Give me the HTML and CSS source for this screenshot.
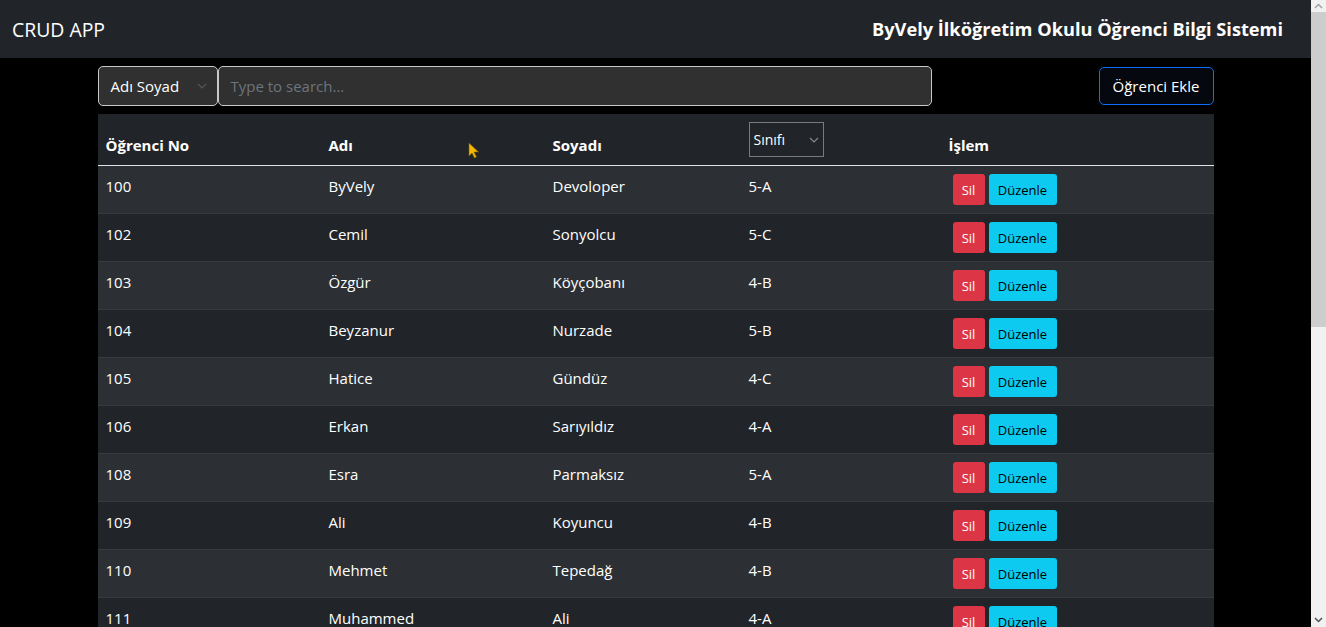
FILE: index.html
```html
<!DOCTYPE html>
<html lang="tr">
<head>
<meta charset="utf-8">
<title>CRUD APP</title>
<link rel="stylesheet" href="styles.css">
</head>
<body>
<div class="shell">
  <div class="page">
    <nav class="navbar">
      <span class="brand">CRUD APP</span>
      <span class="title">ByVely İlköğretim Okulu Öğrenci Bilgi Sistemi</span>
    </nav>
    <main class="container">
      <div class="toolbar">
        <div class="input-group">
          <div class="select">Adı Soyad
            <svg class="chev" width="10" height="6" viewBox="0 0 10 6"><path d="M1 1l4 4 4-4" fill="none" stroke="#555" stroke-width="1.2"/></svg>
          </div>
          <div class="search">Type to search...</div>
        </div>
        <button class="btn-add">Öğrenci Ekle</button>
      </div>
      <table class="table">
        <thead>
          <tr>
            <th class="c1">Öğrenci No</th>
            <th class="c2">Adı</th>
            <th class="c3">Soyadı</th>
            <th class="c4"><div class="class-select">Sınıfı<svg class="chev2" width="10" height="6" viewBox="0 0 10 6"><path d="M1 1l4 4 4-4" fill="none" stroke="#888" stroke-width="1.2"/></svg></div></th>
            <th class="c5">İşlem</th>
          </tr>
        </thead>
        <tbody>
          <tr><td>100</td><td>ByVely</td><td>Devoloper</td><td>5-A</td><td><span class="btn sil">Sil</span><span class="btn duz">Düzenle</span></td></tr>
          <tr><td>102</td><td>Cemil</td><td>Sonyolcu</td><td>5-C</td><td><span class="btn sil">Sil</span><span class="btn duz">Düzenle</span></td></tr>
          <tr><td>103</td><td>Özgür</td><td>Köyçobanı</td><td>4-B</td><td><span class="btn sil">Sil</span><span class="btn duz">Düzenle</span></td></tr>
          <tr><td>104</td><td>Beyzanur</td><td>Nurzade</td><td>5-B</td><td><span class="btn sil">Sil</span><span class="btn duz">Düzenle</span></td></tr>
          <tr><td>105</td><td>Hatice</td><td>Gündüz</td><td>4-C</td><td><span class="btn sil">Sil</span><span class="btn duz">Düzenle</span></td></tr>
          <tr><td>106</td><td>Erkan</td><td>Sarıyıldız</td><td>4-A</td><td><span class="btn sil">Sil</span><span class="btn duz">Düzenle</span></td></tr>
          <tr><td>108</td><td>Esra</td><td>Parmaksız</td><td>5-A</td><td><span class="btn sil">Sil</span><span class="btn duz">Düzenle</span></td></tr>
          <tr><td>109</td><td>Ali</td><td>Koyuncu</td><td>4-B</td><td><span class="btn sil">Sil</span><span class="btn duz">Düzenle</span></td></tr>
          <tr><td>110</td><td>Mehmet</td><td>Tepedağ</td><td>4-B</td><td><span class="btn sil">Sil</span><span class="btn duz">Düzenle</span></td></tr>
          <tr><td>111</td><td>Muhammed</td><td>Ali</td><td>4-A</td><td><span class="btn sil">Sil</span><span class="btn duz">Düzenle</span></td></tr>
          <tr><td>112</td><td>Zeynep</td><td>Yılmaz</td><td>5-C</td><td><span class="btn sil">Sil</span><span class="btn duz">Düzenle</span></td></tr>
        </tbody>
      </table>
      <svg class="cursor" width="12" height="17" viewBox="0 0 12 17"><path d="M1 1v13l3-3 2.5 5 2-1-2.5-5h4.5z" fill="#f5b800" stroke="#7a5a00" stroke-width="0.6"/></svg>
    </main>
  </div>
  <div class="scrollbar">
    <div class="sb-arrow up"><svg width="9" height="6" viewBox="0 0 9 6"><path d="M1 5l3.5-3.5L8 5" fill="none" stroke="#a3a3a3" stroke-width="1.5"/></svg></div>
    <div class="sb-track"><div class="sb-thumb"></div></div>
    <div class="sb-arrow down"><svg width="9" height="6" viewBox="0 0 9 6"><path d="M1 1l3.5 3.5L8 1" fill="none" stroke="#505050" stroke-width="1.5"/></svg></div>
  </div>
</div>
</body>
</html>
```

FILE: styles.css
```css
* { box-sizing: border-box; }
html, body {
  margin: 0;
  height: 100%;
  overflow: hidden;
  background: #000;
  color: #fff;
  font-family: "Open Sans", "Noto Sans", sans-serif;
  font-size: 15px;
}
.shell { display: flex; height: 627px; }
.page { flex: 1; min-width: 0; background: #000; overflow: hidden; }
.navbar {
  height: 58px;
  background: #212529;
  display: flex;
  align-items: center;
  justify-content: space-between;
  padding: 0 28px 0 12px;
}
.brand { font-size: 19.4px; color: #fff; }
.title { font-size: 18.2px; font-weight: 700; color: #fff; }
.container {
  width: 1116px;
  margin: 0 auto;
  position: relative;
}
.toolbar {
  display: flex;
  justify-content: space-between;
  align-items: center;
  margin-top: 8px;
  height: 40px;
}
.input-group { display: flex; width: 834px; height: 40px; }
.select {
  width: 120px;
  background: #303030;
  border: 1px solid #c8c8c8;
  border-radius: 5px;
  padding: 0 12px;
  display: flex;
  align-items: center;
  justify-content: space-between;
  font-size: 15px;
}
.chev { margin-right: -2px; }
.search {
  flex: 1;
  background: #303030;
  border: 1px solid #c8c8c8;
  border-radius: 5px;
  padding: 0 12px;
  display: flex;
  align-items: center;
  color: #6c757d;
  font-size: 15px;
}
.btn-add {
  width: 115px;
  height: 38px;
  background: #05090f;
  border: 1px solid #0d6efd;
  border-radius: 5px;
  color: #fff;
  font-family: inherit;
  font-size: 15px;
  padding: 0;
}
.table {
  margin-top: 8px;
  width: 100%;
  border-collapse: collapse;
  background: #212529;
}
th, td { padding: 8px; text-align: left; }
thead tr { border-bottom: 1px solid #dee2e6; }
th { vertical-align: bottom; font-weight: 700; font-size: 15px; line-height: 24px; }
td { vertical-align: top; font-size: 15px; line-height: 24px; height: 48px; }
tbody tr { border-bottom: 1px solid #373b3e; }
tbody tr:nth-child(odd) { background: #2c3034; }
.c1 { width: 223px; }
.c2 { width: 224px; }
.c3 { width: 196px; }
.c4 { width: 200px; }
.class-select {
  width: 75px;
  height: 35px;
  border: 1px solid #7a7a7a;
  display: flex;
  align-items: center;
  justify-content: space-between;
  padding: 0 4px;
  font-weight: 400;
  font-size: 14px;
}
.btn {
  display: inline-block;
  height: 31px;
  line-height: 32px;
  border-radius: 3px;
  font-size: 13px;
  margin-left: 4px;
  vertical-align: top;
  text-align: center;
}
.sil { background: #dc3545; color: #fff; width: 32px; }
.duz { background: #0dcaf0; color: #000; width: 68px; }
.cursor { position: absolute; left: 370px; top: 76px; }
.scrollbar {
  width: 15px;
  background: #f1f1f1;
  display: flex;
  flex-direction: column;
}
.sb-arrow { height: 12px; display: flex; align-items: center; justify-content: center; }
.sb-track { flex: 1; }
.sb-thumb { height: 315px; background: #cdcdcd; }
.sb-arrow.down { height: 15px; }
```
